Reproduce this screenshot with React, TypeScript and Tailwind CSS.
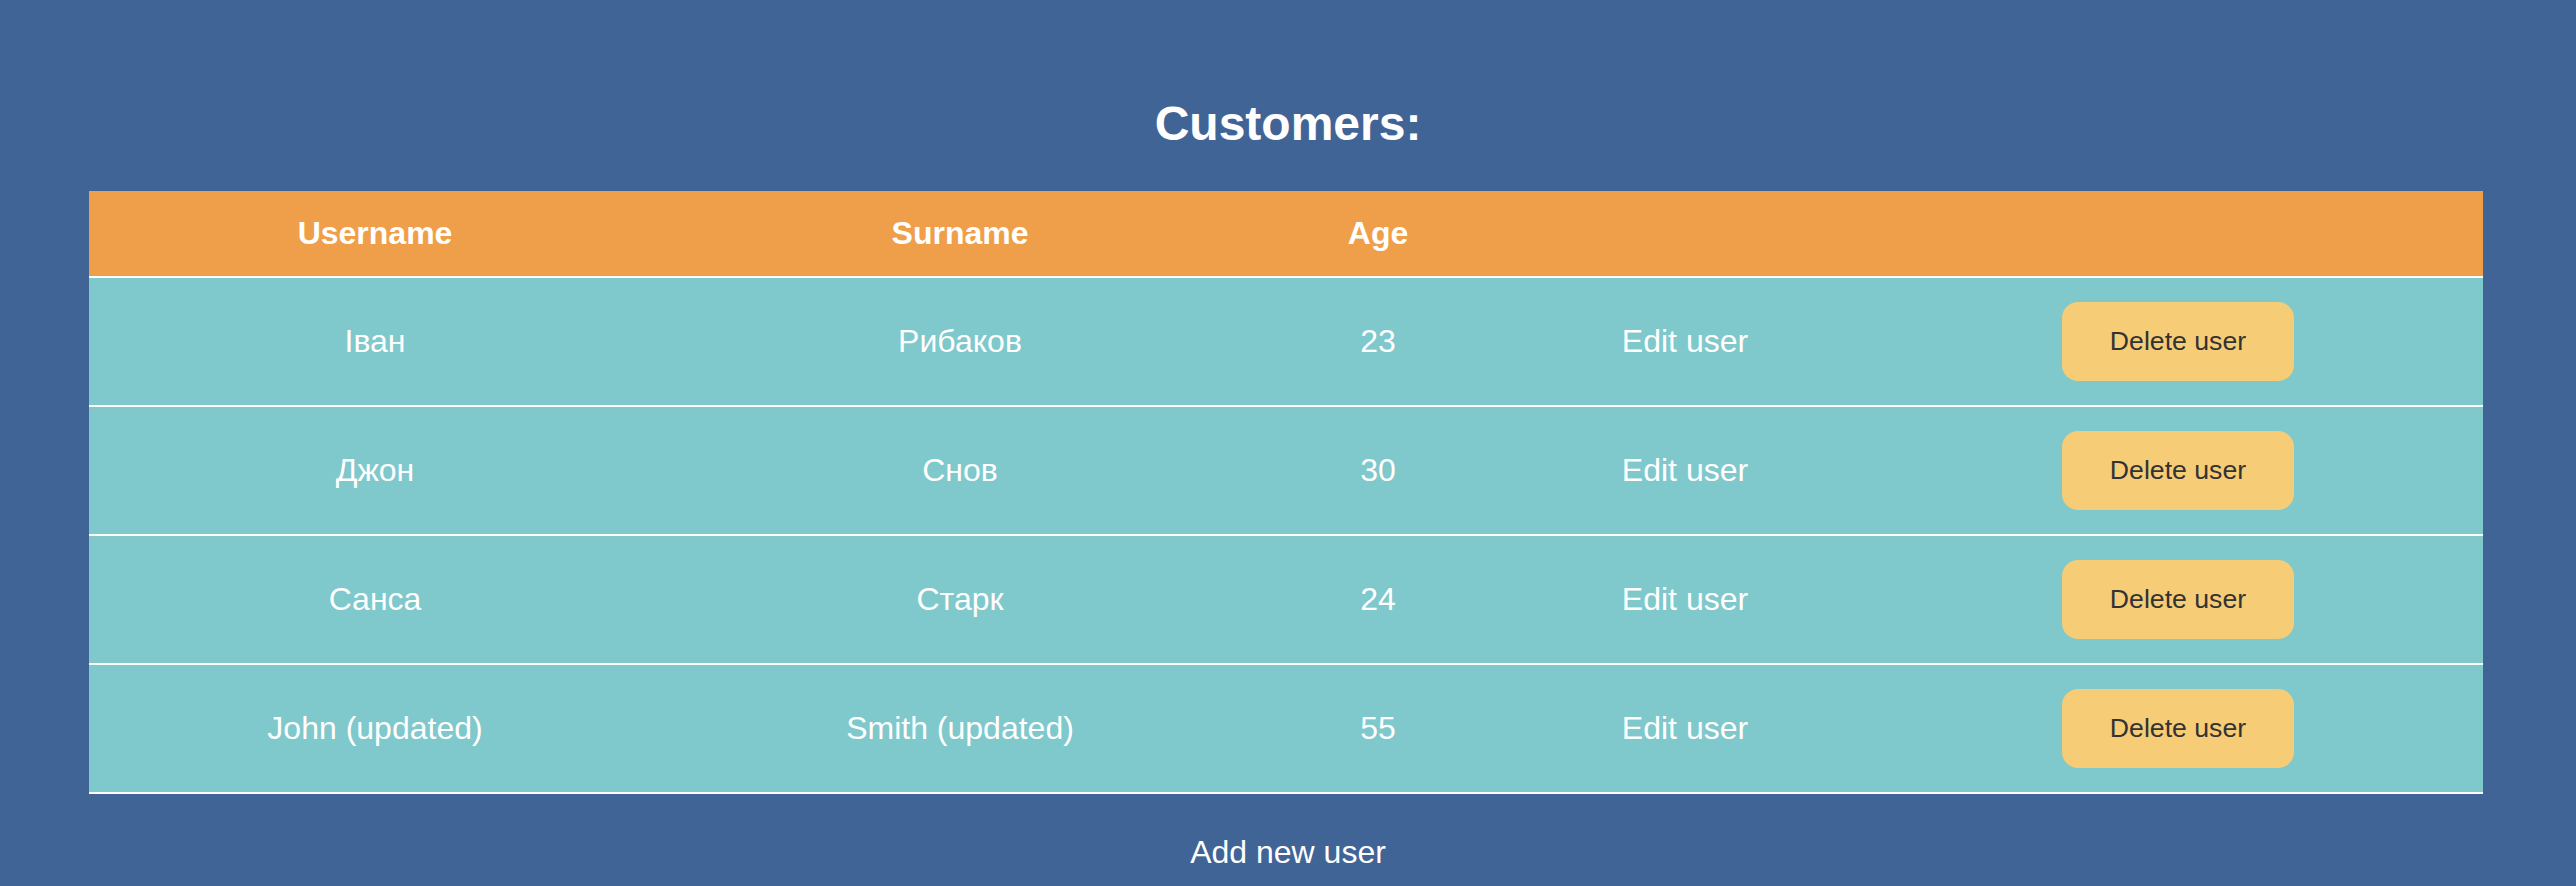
import React from "react";

const rows = [
  { name: "Іван", surname: "Рибаков", age: 23 },
  { name: "Джон", surname: "Снов", age: 30 },
  { name: "Санса", surname: "Старк", age: 24 },
  { name: "John (updated)", surname: "Smith (updated)", age: 55 },
];

export default function App() {
  return (
    <div className="min-h-screen bg-[#406496] pt-[97px] font-['Liberation_Sans',Arial,sans-serif] text-white">
      <h1 className="text-center text-[48px] font-bold leading-[54px]">Customers:</h1>
      <table className="ml-[89px] mt-[40px] w-[2394px] table-fixed border-separate border-spacing-0">
        <thead>
          <tr className="bg-[#ef9e4a]">
            <th className="w-[572px] border-b-2 border-white py-[24px] text-[32px] font-bold leading-[37px]">Username</th>
            <th className="w-[598px] border-b-2 border-white py-[24px] text-[32px] font-bold leading-[37px]">Surname</th>
            <th className="w-[238px] border-b-2 border-white py-[24px] text-[32px] font-bold leading-[37px]">Age</th>
            <th className="w-[376px] border-b-2 border-white py-[24px]"></th>
            <th className="w-[610px] border-b-2 border-white py-[24px]"></th>
          </tr>
        </thead>
        <tbody>
          {rows.map((r) => (
            <tr key={r.name} className="bg-[#7fc8cb] text-[32px] leading-[37px]">
              <td className="border-b-2 border-white py-[24px] text-center align-middle">{r.name}</td>
              <td className="border-b-2 border-white py-[24px] text-center align-middle">{r.surname}</td>
              <td className="border-b-2 border-white py-[24px] text-center align-middle">{r.age}</td>
              <td className="border-b-2 border-white py-[24px] text-center align-middle">Edit user</td>
              <td className="border-b-2 border-white py-[24px] text-center align-middle">
                <button className="rounded-[16px] bg-[#f6cd76] px-[48px] py-[24px] align-middle text-[26.67px] leading-[31px] text-[#333333]">
                  Delete user
                </button>
              </td>
            </tr>
          ))}
        </tbody>
      </table>
      <div className="mt-[40px] text-center text-[32px] leading-[37px]">Add new user</div>
    </div>
  );
}
